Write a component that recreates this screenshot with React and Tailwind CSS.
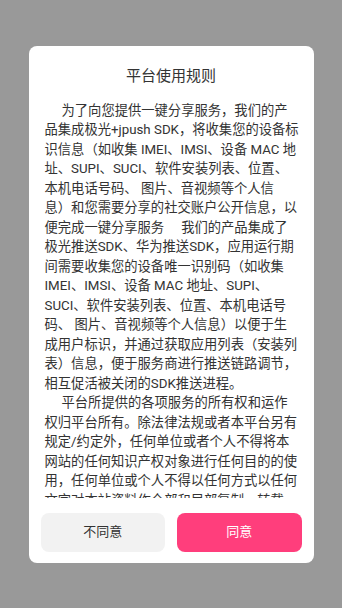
import React from "react";

const para1 = [
  "为了向您提供一键分享服务，我们的产",
  "品集成极光+jpush SDK，将收集您的设备标",
  "识信息（如收集 IMEI、IMSI、设备 MAC 地",
  "址、SUPI、SUCI、软件安装列表、位置、",
  "本机电话号码、 图片、音视频等个人信",
  "息）和您需要分享的社交账户公开信息，以",
  "GAP",
  "极光推送SDK、华为推送SDK，应用运行期",
  "间需要收集您的设备唯一识别码（如收集",
  "IMEI、IMSI、设备 MAC 地址、SUPI、",
  "SUCI、软件安装列表、位置、本机电话号",
  "码、 图片、音视频等个人信息）以便于生",
  "成用户标识，并通过获取应用列表（安装列",
  "表）信息，便于服务商进行推送链路调节，",
  "相互促活被关闭的SDK推送进程。",
];

const para2 = [
  "平台所提供的各项服务的所有权和运作",
  "权归平台所有。除法律法规或者本平台另有",
  "规定/约定外，任何单位或者个人不得将本",
  "网站的任何知识产权对象进行任何目的的使",
  "用，任何单位或个人不得以任何方式以任何",
  "文字对本站资料作全部和局部复制、转载",
  "、引用和链接。",
];

function Line({ text, first }) {
  if (text === "GAP") {
    return (
      <div className="whitespace-nowrap">
        便完成一键分享服务<span className="inline-block w-[17px]"></span>我们的产品集成了
      </div>
    );
  }
  return <div className={first ? "whitespace-nowrap pl-[17px]" : "whitespace-nowrap"}>{text}</div>;
}

export default function App() {
  return (
    <div className="w-[342px] h-[608px] bg-[#999999] flex items-center justify-center font-['Roboto','Noto_Sans_CJK_SC',sans-serif]">
      <div className="w-[285px] h-[517px] bg-white rounded-[8px] flex flex-col overflow-hidden">
        <div className="pt-[19px] text-center text-[15px] leading-[22px] text-[#333333]">
          平台使用规则
        </div>
        <div className="flex-1 min-h-0 overflow-hidden mt-[14px] pl-[16px] pr-[8px]">
          <div className="text-[13.3px] leading-[19.5px] text-[#333333]">
            {para1.map((t, i) => (
              <Line key={"a" + i} text={t} first={i === 0} />
            ))}
            {para2.map((t, i) => (
              <Line key={"b" + i} text={t} first={i === 0} />
            ))}
          </div>
        </div>
        <div className="flex gap-[12px] px-[12px] pt-[15px] pb-[11px]">
          <button className="flex-1 h-[39px] rounded-[8px] bg-[#f2f2f2] text-[13px] text-[#333333]">
            不同意
          </button>
          <button className="flex-1 h-[39px] rounded-[8px] bg-[#ff3e7c] text-[13px] text-white">
            同意
          </button>
        </div>
      </div>
    </div>
  );
}
